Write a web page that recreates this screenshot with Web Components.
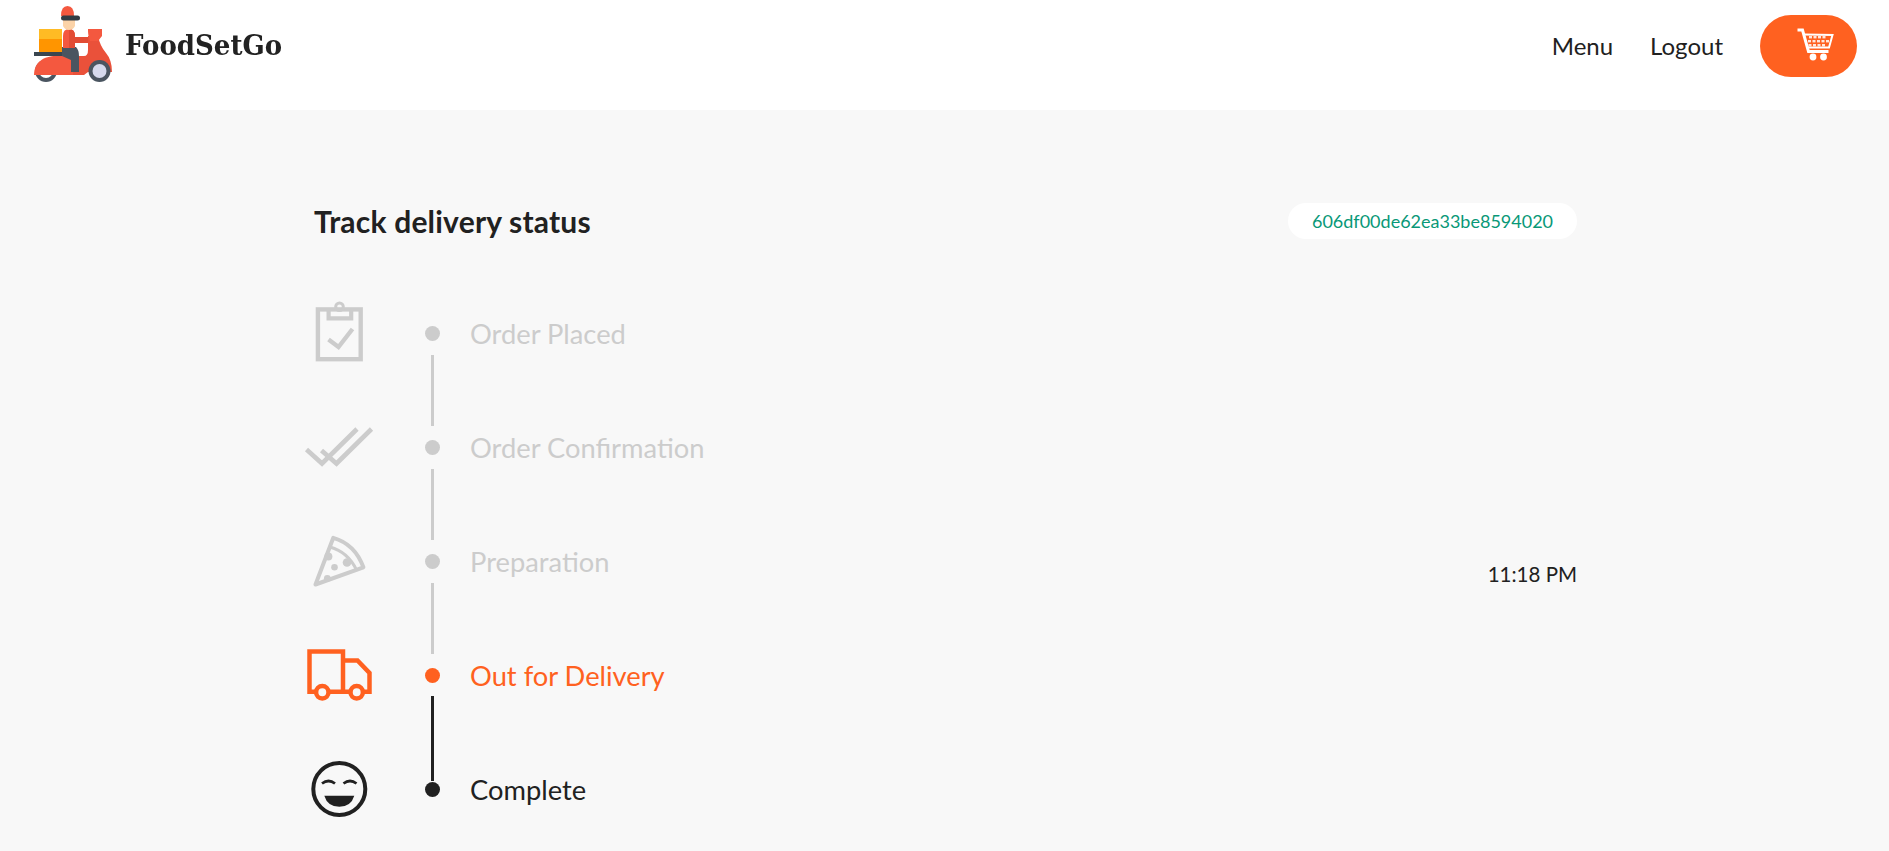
<!DOCTYPE html>
<html lang="en">
<head>
<meta charset="utf-8">
<title>FoodSetGo</title>
<style>
  html, body { margin: 0; background: #f8f8f8; }
  body { font-family: Lato, "Liberation Sans", sans-serif; color: #212121; }
  svg { display: block; }
</style>
</head>
<body>

<app-header>
  <a slot="nav">Menu</a>
  <a slot="nav">Logout</a>
</app-header>

<delivery-status heading="Track delivery status" order-id="606df00de62ea33be8594020">
  <status-step state="done" label="Order Placed">
    <svg slot="icon" width="70" height="70" viewBox="0 0 70 70" fill="none" stroke="currentColor">
      <rect x="13.9" y="10.4" width="42.8" height="49.8" stroke-width="4.4"/>
      <path d="M24.6 10v9.4h22.6V10" stroke-width="4.2"/>
      <circle cx="35.5" cy="7.8" r="3.8" stroke-width="3"/>
      <path d="M24.5 40.5l10 7.5L48.5 30" stroke-width="4.4"/>
    </svg>
  </status-step>
  <status-step state="done" label="Order Confirmation">
    <svg slot="icon" width="70" height="70" viewBox="0 0 70 70" fill="none" stroke="currentColor" stroke-width="4.6">
      <path d="M2.5 36.5l15.5 14L53 16"/>
      <path d="M17.5 37.5l15 13L67.5 16"/>
    </svg>
  </status-step>
  <status-step state="done" label="Preparation">
    <svg slot="icon" width="70" height="70" viewBox="0 0 70 70" fill="none" stroke="currentColor">
      <path d="M11.5 57.5L29.3 10.8Q51 17 59.4 40.3Z" stroke-width="4" stroke-linejoin="round"/>
      <path d="M26 20Q44 25 52.5 43" stroke-width="3"/>
      <g fill="currentColor" stroke="none">
        <circle cx="43" cy="35.5" r="4.3"/>
        <circle cx="30.5" cy="40.3" r="3.3"/>
        <circle cx="24.4" cy="29.5" r="4"/>
        <circle cx="23.3" cy="51.5" r="3.4"/>
      </g>
    </svg>
    <time-stamp slot="aside">11:18 PM</time-stamp>
  </status-step>
  <status-step state="active" label="Out for Delivery">
    <svg slot="icon" width="70" height="70" viewBox="0 0 70 70" fill="none" stroke="currentColor" stroke-width="4.5">
      <path d="M12 50.8H5.5V10.5H39V50.8"/>
      <path d="M24.6 50.8H46.4M59 50.8H65.5V32L53.5 19.5H39"/>
      <circle cx="18.3" cy="51.2" r="6.2"/>
      <circle cx="52.7" cy="51.2" r="6.2"/>
    </svg>
  </status-step>
  <status-step state="pending" label="Complete" last>
    <svg slot="icon" width="70" height="70" viewBox="0 0 70 70" fill="none" stroke="currentColor">
      <circle cx="35.3" cy="34" r="26" stroke-width="4"/>
      <path d="M18 28.5Q24.5 23.5 31 28.5M39.5 28.5Q46 23.5 52.5 28.5" stroke-width="2.8"/>
      <path d="M20.3 40.8H50.3Q47 51.8 35.3 51.8T20.3 40.8Z" fill="currentColor" stroke="none"/>
    </svg>
  </status-step>
</delivery-status>

<script>
class LogoMark extends HTMLElement {
  constructor() {
    super();
    this.attachShadow({ mode: 'open' });
    this.shadowRoot.innerHTML = `
    <style>
      :host { display: flex; align-items: flex-start; }
      svg { display: block; width: 90px; height: 90px; margin-top: -15px; filter: blur(.6px); }
      span {
        margin: 12px 0 0 5px;
        font: 700 28px/38px "DejaVu Serif", serif;
        color: #222;
        transform: scaleX(.93);
        transform-origin: left center;
        filter: blur(.4px);
      }
    </style>
    <svg viewBox="30 0 90 90">
      <circle cx="46" cy="71" r="11" fill="#4a5560"/>
      <circle cx="46" cy="71" r="7" fill="#fff"/>
      <path d="M34 75C34 62 44 56 56 56H73L78 75Z" fill="#f4583f"/>
      <path d="M73 56H84Q88 56 88 50V36H98Q100 46 106 53Q112 60 112 72H88L84 75H73Z" fill="#ea513a"/>
      <path d="M88 29H102V36L98 41H90C88 36 88 32 88 29Z" fill="#f4583f"/>
      <rect x="39" y="29" width="23" height="10" fill="#ffbb24"/>
      <rect x="39" y="39" width="23" height="13" fill="#ff9500"/>
      <rect x="34" y="52" width="30" height="4" fill="#3a4650"/>
      <path d="M62 47H76Q79 50 79 56V72H71V60L62 56Z" fill="#4a5560"/>
      <path d="M63 36Q63 29 69 29Q75 29 75 36V37H88V43H75V48H63Z" fill="#f4583f"/>
      <path d="M69 29Q75 29 75 36V37H88V43H75V48H69Z" fill="#e24c34"/>
      <path d="M63 20H75V26Q73 30 69 30 65 30 63 26Z" fill="#fbd3a8"/>
      <path d="M61 16Q61 6 67.5 6T74 16Z" fill="#f4583f"/>
      <rect x="61" y="15.5" width="19" height="5" rx="2.5" fill="#333c44"/>
      <circle cx="99.5" cy="71" r="11" fill="#4a5560"/>
      <circle cx="99.5" cy="71" r="7" fill="#d5d9ec"/>
    </svg>
    <span>FoodSetGo</span>`;
  }
}

class CartButton extends HTMLElement {
  constructor() {
    super();
    this.attachShadow({ mode: 'open' });
    this.shadowRoot.innerHTML = `
    <style>
      :host {
        display: flex; align-items: center;
        width: 97px; height: 62px; box-sizing: border-box;
        padding-left: 36px;
        background: #ff6120;
        border-radius: 31px;
      }
      svg { display: block; }
    </style>
    <svg width="40" height="40" viewBox="0 0 40 40">
      <path d="M1.5 4H6.5L12.5 25.5H32.5" fill="none" stroke="#fff" stroke-width="3"/>
      <path d="M8.5 8.5L36.5 9L33 21.5H11.5" fill="none" stroke="#fff" stroke-width="2"/>
      <g fill="#fff" opacity=".85">
        <rect x="13" y="10" width="3" height="2.4"/><rect x="17.5" y="10" width="3" height="2.4"/><rect x="22" y="10" width="3" height="2.4"/><rect x="26.5" y="10" width="3" height="2.4"/>
        <rect x="12" y="14" width="3" height="2.4"/><rect x="16.5" y="14" width="3" height="2.4"/><rect x="21" y="14" width="3" height="2.4"/><rect x="25.5" y="14" width="3" height="2.4"/><rect x="30" y="14" width="3" height="2.4"/>
        <rect x="12.5" y="18" width="3" height="2.4"/><rect x="17" y="18" width="3" height="2.4"/><rect x="21.5" y="18" width="3" height="2.4"/><rect x="26" y="18" width="3" height="2.4"/>
      </g>
      <circle cx="17" cy="31" r="3.4" fill="#fff"/>
      <circle cx="27.5" cy="31" r="3.4" fill="#fff"/>
    </svg>`;
  }
}

class AppHeader extends HTMLElement {
  constructor() {
    super();
    this.attachShadow({ mode: 'open' });
    this.shadowRoot.innerHTML = `
    <style>
      :host {
        display: flex; align-items: flex-start;
        height: 110px; box-sizing: border-box;
        padding: 15px 32px 0 30px;
        background: #fff;
        color: #212121;
      }
      nav { margin-left: auto; display: flex; align-items: center; gap: 37px; font-size: 24px; }
      ::slotted(a) { color: inherit; margin-bottom: 2px; }
    </style>
    <logo-mark></logo-mark>
    <nav>
      <slot name="nav"></slot>
      <cart-button></cart-button>
    </nav>`;
  }
}

class DeliveryStatus extends HTMLElement {
  constructor() {
    super();
    this.attachShadow({ mode: 'open' });
  }

  connectedCallback() {
    const heading = this.getAttribute('heading') || '';
    const orderId = this.getAttribute('order-id') || '';
    this.shadowRoot.innerHTML = `
    <style>
      :host { display: block; padding: 93px 312px 0 304px; }
      .head {
        display: flex; align-items: center; justify-content: space-between;
        margin: 0 0 87px 10px;
      }
      h2 { margin: 0; font-size: 30px; line-height: 36px; font-weight: 700; color: #212121; letter-spacing: .2px; }
      .id {
        width: 289px; height: 36px; line-height: 36px;
        text-align: center;
        background: #fff;
        border-radius: 18px;
        font-size: 18px;
        color: #089877;
      }
    </style>
    <div class="head">
      <h2>${heading}</h2>
      <div class="id">${orderId}</div>
    </div>
    <slot></slot>`;
  }
}

class StatusStep extends HTMLElement {
  constructor() {
    super();
    this.attachShadow({ mode: 'open' });
  }

  connectedCallback() {
    const label = this.getAttribute('label') || '';
    this.shadowRoot.innerHTML = `
    <style>
      :host {
        display: flex; align-items: flex-start;
        height: 114px;
        color: #ccc;
        --rail: #ccc;
      }
      :host([state="active"]) { color: #ff6120; --rail: #212121; }
      :host([state="pending"]) { color: #212121; --rail: #212121; }
      :host([last]) { height: 40px; }
      .icon { width: 70px; height: 70px; margin-top: -27px; flex: none; }
      .rail { width: 15px; margin-left: 51px; flex: none; }
      .dot { width: 15px; height: 15px; border-radius: 50%; background: currentColor; }
      .line { width: 3px; height: 71px; margin: 14px 0 0 6px; background: var(--rail); }
      :host([state="active"]) .line { height: 85px; margin-top: 13px; margin-bottom: -20px; }
      :host([last]) .line { display: none; }
      .label { margin-left: 30px; font-size: 27.3px; line-height: 16px; }
      .aside { margin-left: auto; }
    </style>
    <div class="icon"><slot name="icon"></slot></div>
    <div class="rail"><div class="dot"></div><div class="line"></div></div>
    <div class="label">${label}</div>
    <div class="aside"><slot name="aside"></slot></div>`;
  }
}

class TimeStamp extends HTMLElement {
  constructor() {
    super();
    this.attachShadow({ mode: 'open' });
    this.shadowRoot.innerHTML = `
    <style>
      :host { display: block; margin-top: 8px; font-size: 20.5px; line-height: 24px; color: #212121; }
    </style>
    <slot></slot>`;
  }
}

customElements.define('logo-mark', LogoMark);
customElements.define('cart-button', CartButton);
customElements.define('app-header', AppHeader);
customElements.define('delivery-status', DeliveryStatus);
customElements.define('status-step', StatusStep);
customElements.define('time-stamp', TimeStamp);
</script>
</body>
</html>
